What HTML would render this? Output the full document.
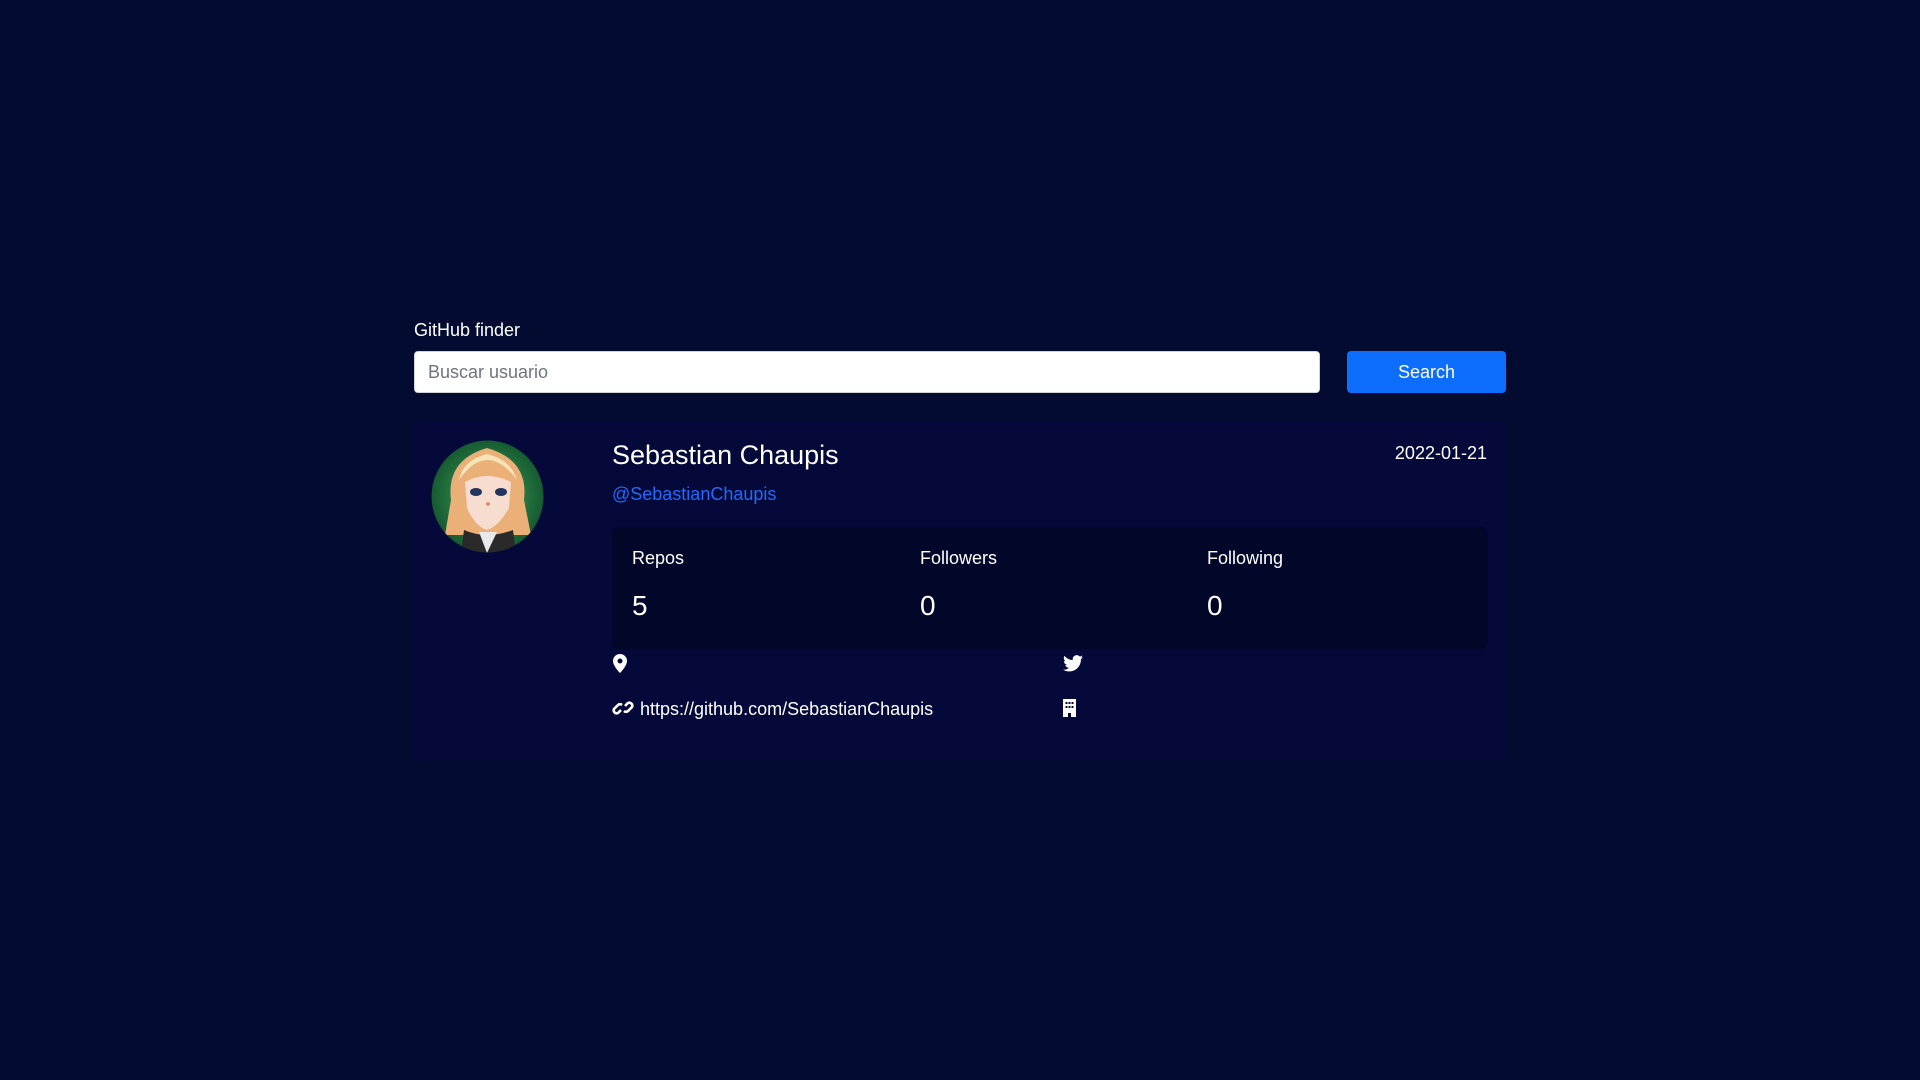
<!DOCTYPE html>
<html><head><meta charset="utf-8"><style>
*{box-sizing:border-box;margin:0;padding:0}
body{width:1920px;height:1080px;background:#030b31;font-family:"Liberation Sans",sans-serif;color:#fff;position:relative;overflow:hidden}
.a{position:absolute;white-space:nowrap}
</style></head><body>
<div class="a" style="left:414px;top:320px;font-size:18px">GitHub finder</div>
<div class="a" style="left:414px;top:351px;width:906px;height:42px;background:#fff;border-radius:4px;border:1px solid #ced4da"></div>
<div class="a" style="left:428px;top:362px;font-size:18px;color:#6c757d">Buscar usuario</div>
<div class="a" style="left:1347px;top:351px;width:159px;height:42px;background:#0d6efd;border-radius:4px;font-size:18px;line-height:42px;text-align:center">Search</div>
<div class="a" style="left:414px;top:422px;width:1092px;height:337px;background:#040939;border-radius:6px"></div>
<svg class="a" style="left:431px;top:440px" width="113" height="113" viewBox="0 0 113 113">
<defs><clipPath id="c"><circle cx="56.5" cy="56.5" r="56"/></clipPath><radialGradient id="g"><stop offset="0" stop-color="#4aa860"/><stop offset="1" stop-color="#155a30"/></radialGradient></defs>
<g clip-path="url(#c)">
<rect width="113" height="113" fill="url(#g)"/>
<path d="M20 60 Q15 20 56 8 Q98 20 93 60 L100 95 L14 95Z" fill="#eab078"/>
<path d="M28 40 Q56 0 86 40 Q80 20 56 14 Q32 20 28 40Z" fill="#f5e4b8"/>
<path d="M33 90 L30 113 L85 113 L82 90 Q56 100 33 90Z" fill="#2a2a2a"/>
<path d="M48 92 L56 113 L66 92Z" fill="#e8e8e8"/>
<path d="M34 42 Q56 30 80 42 L78 68 Q68 86 56 90 Q44 86 36 68Z" fill="#f7ddd0"/>
<ellipse cx="45" cy="52" rx="6" ry="4" fill="#23355f"/><ellipse cx="70" cy="52" rx="6" ry="4" fill="#23355f"/>
<circle cx="57" cy="64" r="2" fill="#d9926e"/>
</g></svg>
<div class="a" style="left:612px;top:440px;font-size:27px">Sebastian Chaupis</div>
<div class="a" style="right:433px;top:443px;font-size:18px">2022-01-21</div>
<div class="a" style="left:612px;top:484px;font-size:18px;color:#1f6bff">@SebastianChaupis</div>
<div class="a" style="left:612px;top:527px;width:876px;height:122px;background:#020628;border-radius:6px"></div>
<div class="a" style="left:632px;top:548px;font-size:18px">Repos</div>
<div class="a" style="left:920px;top:548px;font-size:18px">Followers</div>
<div class="a" style="left:1207px;top:548px;font-size:18px">Following</div>
<div class="a" style="left:632px;top:590px;font-size:28px">5</div>
<div class="a" style="left:920px;top:590px;font-size:28px">0</div>
<div class="a" style="left:1207px;top:590px;font-size:28px">0</div>
<svg class="a" style="left:613px;top:654px" width="14" height="19" viewBox="0 0 14 19"><path d="M7 0A7 7 0 0 0 0 7C0 12 7 19 7 19S14 12 14 7A7 7 0 0 0 7 0ZM7 4.5A2.5 2.5 0 1 1 7 9.5A2.5 2.5 0 1 1 7 4.5Z" fill="#fff" fill-rule="evenodd"/></svg>
<svg class="a" style="left:1063px;top:655px" width="20" height="17" viewBox="0 0 24 20"><path d="M24 2.4a10 10 0 0 1-2.8.8A5 5 0 0 0 23.3.4a10 10 0 0 1-3.1 1.2A4.9 4.9 0 0 0 11.8 6 14 14 0 0 1 1.7.9a4.9 4.9 0 0 0 1.5 6.6A4.9 4.9 0 0 1 1 6.9a4.9 4.9 0 0 0 3.9 4.8 5 5 0 0 1-2.2.1 4.9 4.9 0 0 0 4.6 3.4A9.9 9.9 0 0 1 0 17.3 14 14 0 0 0 7.5 19.5c9.1 0 14-7.5 14-14v-.6A10 10 0 0 0 24 2.4Z" fill="#fff"/></svg>
<svg class="a" style="left:612px;top:699px" width="22" height="18" viewBox="0 0 22 18" fill="none" stroke="#fff" stroke-width="2.6"><path d="M9 11 L6 14 A3 3 0 0 1 2 10 L6 6 A3 3 0 0 1 10 6"/><path d="M13 7 L16 4 A3 3 0 0 1 20 8 L16 12 A3 3 0 0 1 12 12"/></svg>
<div class="a" style="left:640px;top:699px;font-size:18px">https://github.com/SebastianChaupis</div>
<svg class="a" style="left:1063px;top:699px" width="13" height="18" viewBox="0 0 13 18"><path d="M0 0H13V18H8V14H5V18H0Z" fill="#fff"/><g fill="#040939"><rect x="2.5" y="3" width="2" height="2"/><rect x="5.5" y="3" width="2" height="2"/><rect x="8.5" y="3" width="2" height="2"/><rect x="2.5" y="7" width="2" height="2"/><rect x="5.5" y="7" width="2" height="2"/><rect x="8.5" y="7" width="2" height="2"/></g></svg>
</body></html>
